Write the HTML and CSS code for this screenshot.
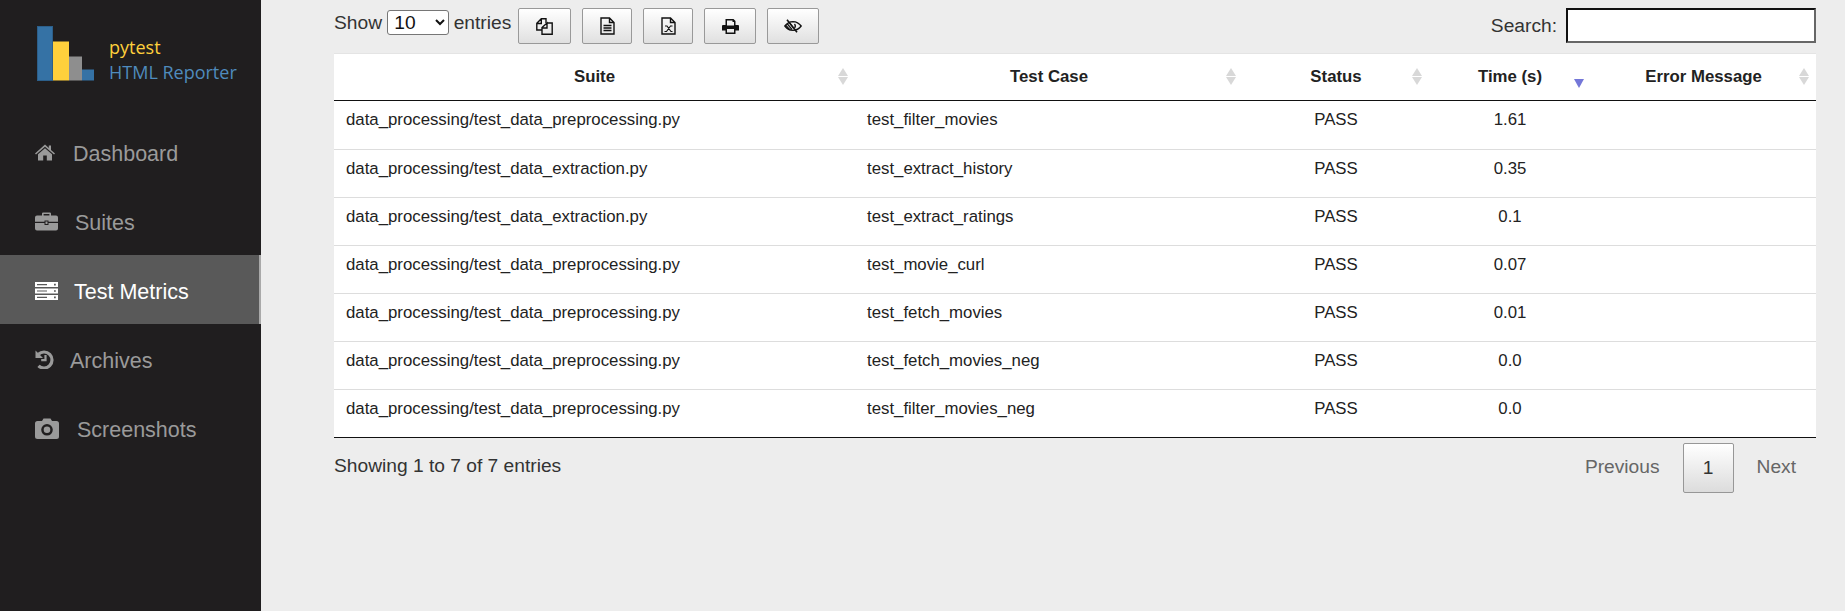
FILE: index.html
```html
<!DOCTYPE html>
<html lang="en">
<head>
  <meta charset="UTF-8">
  <meta name="viewport" content="width=device-width, initial-scale=1.0">
  <title>pytest HTML Reporter</title>
  <link rel="stylesheet" href="styles.css">
</head>
<body>
  <aside class="sidebar">
    <div class="brand">
      <svg class="brand-logo" width="58" height="56" viewBox="0 0 58 56">
        <rect x="0.5" y="0.5" width="15" height="54" fill="#3572a5" stroke="#2c5f8a"/>
        <rect x="16" y="15.5" width="16" height="39" fill="#ffd03c"/>
        <rect x="32" y="30.5" width="13" height="24" fill="#8e8e8e"/>
        <rect x="45" y="43.5" width="12" height="11" fill="#3572a5"/>
      </svg>
      <div class="brand-text">
        <span class="brand-top">pytest</span>
        <span class="brand-bottom">HTML Reporter</span>
      </div>
    </div>
    <nav class="nav">
      <a class="nav-item nav-dashboard">
        <svg class="nav-icon" width="20" height="17" viewBox="0 0 20 17"><path d="M10 0.5 L13.8 4 V1.5 H16 V6 L20 9.5 L19 10.5 L10 2.8 L1 10.5 L0 9.5 Z M10 4.3 L17 10.3 V16.5 H11.8 V11.5 H8.2 V16.5 H3 V10.3 Z" fill="currentColor"/></svg>
        <span>Dashboard</span>
      </a>
      <a class="nav-item nav-suites">
        <svg class="nav-icon" width="23" height="19" viewBox="0 0 23 19"><path d="M7 3.5 V1.6 Q7 0.5 8.1 0.5 H14.9 Q16 0.5 16 1.6 V3.5 H21 Q23 3.5 23 5.5 V9.8 H13.5 V8.5 H9.5 V9.8 H0 V5.5 Q0 3.5 2 3.5 Z M8.6 3.5 H14.4 V2 H8.6 Z M0 11 H9.5 V13 H13.5 V11 H23 V16.5 Q23 18.5 21 18.5 H2 Q0 18.5 0 16.5 Z M10.5 9.5 H12.5 V12 H10.5 Z" fill="currentColor" fill-rule="evenodd"/></svg>
        <span>Suites</span>
      </a>
      <a class="nav-item nav-metrics active">
        <svg class="nav-icon" width="23" height="18" viewBox="0 0 23 18"><path d="M0 0 H23 V5 H0 Z M0 6.5 H23 V11.5 H0 Z M0 13 H23 V18 H0 Z M2 3.2 V2 H12 V3.2 Z M2 9.6 V8.4 H12 V9.6 Z M2 16 V14.8 H12 V16 Z M19 1.8 H20.8 V3.4 H19 Z M19 8.2 H20.8 V9.8 H19 Z M19 14.6 H20.8 V16.2 H19 Z" fill="currentColor" fill-rule="evenodd"/></svg>
        <span>Test Metrics</span>
      </a>
      <a class="nav-item nav-archives">
        <svg class="nav-icon" width="20" height="19" viewBox="0 0 20 19"><path d="M0.5 0.5 V8 H8 Z" fill="currentColor"/><path d="M3.5 4.2 A8 8 0 1 1 3.5 15.8" fill="none" stroke="currentColor" stroke-width="3.2"/><path d="M10.5 5 V10.2 H6.2" fill="none" stroke="currentColor" stroke-width="2.2"/></svg>
        <span>Archives</span>
      </a>
      <a class="nav-item nav-shots">
        <svg class="nav-icon" width="24" height="21" viewBox="0 0 24 21"><path d="M7 3 L8.5 0.5 H15.5 L17 3 H21.5 Q24 3 24 5.5 V18.5 Q24 21 21.5 21 H2.5 Q0 21 0 18.5 V5.5 Q0 3 2.5 3 Z M12 6 A5.8 5.8 0 1 0 12 17.6 A5.8 5.8 0 1 0 12 6 Z M12 8.5 A3.3 3.3 0 1 1 12 15.1 A3.3 3.3 0 1 1 12 8.5 Z" fill="currentColor" fill-rule="evenodd"/></svg>
        <span>Screenshots</span>
      </a>
    </nav>
  </aside>

  <main class="content">
    <div class="toolbar">
      <div class="toolbar-left">
        <label class="length">Show
          <select class="length-select"><option>10</option></select>
          entries</label>
        <div class="buttons">
          <button class="dt-button btn-copy" type="button">
            <svg width="17" height="17" viewBox="0 0 17 17" fill="none" stroke="#111" stroke-width="1.4"><path d="M10 5 V0.8 H5.3 L0.8 5.3 V12 H6 M5.3 0.8 V5.5 H0.8"/><path d="M11 5 H16.2 V16.2 H6 V9.6 L11 5 V10 H6"/></svg>
          </button>
          <button class="dt-button btn-doc" type="button">
            <svg width="15" height="18" viewBox="0 0 15 18" fill="none" stroke="#111" stroke-width="1.4"><path d="M1 1 H9.5 L14 5.5 V17 H1 Z M9.5 1 V5.5 H14 M3.5 8.5 H11.5 M3.5 11 H11.5 M3.5 13.5 H11.5"/></svg>
          </button>
          <button class="dt-button btn-xls" type="button">
            <svg width="15" height="18" viewBox="0 0 15 18" fill="none" stroke="#111" stroke-width="1.4"><path d="M1 1 H9.5 L14 5.5 V17 H1 Z M9.5 1 V5.5 H14"/><path d="M4 9 H6 L10 14.5 H11.5 M3.5 14.5 H5.5 L9.5 9 H11.5" stroke-width="1.1"/></svg>
          </button>
          <button class="dt-button btn-print" type="button">
            <svg width="17" height="15" viewBox="0 0 17 15"><path d="M3.5 0 H11.5 L13.5 2 V6 H16 Q17 6 17 7 V11.5 H13.5 V15 H3.5 V11.5 H0 V7 Q0 6 1 6 H3.5 Z M5 1.5 V6.5 H12 V3 H10.5 V1.5 Z M5 10 V13.5 H12 V10 Z" fill="#111" fill-rule="evenodd"/></svg>
          </button>
          <button class="dt-button btn-eye" type="button">
            <svg width="18" height="14" viewBox="0 0 18 14" fill="none" stroke="#111"><path d="M0.8 7 Q4 2.8 9 2.6 Q14 2.8 17.2 7 Q14 11.2 9 11.4 Q4 11.2 0.8 7 Z" stroke-width="1.3"/><path d="M3 0.8 L13 13.2" stroke-width="1.6"/><path d="M1.5 6 L6 11 M3 4.5 L8 10.5 M5 3.2 L9.5 9" stroke-width="1.2"/><path d="M10.5 5 Q12.2 7 10.5 9" stroke-width="1.3"/></svg>
          </button>
        </div>
      </div>
      <label class="search">Search:
        <input class="search-input" type="search">
      </label>
    </div>

    <table class="report">
      <colgroup>
        <col class="col-suite">
        <col class="col-case">
        <col class="col-status">
        <col class="col-time">
        <col class="col-error">
      </colgroup>
      <thead>
        <tr>
          <th class="sortable">Suite</th>
          <th class="sortable">Test Case</th>
          <th class="sortable">Status</th>
          <th class="sorted">Time (s)</th>
          <th class="sortable">Error Message</th>
        </tr>
      </thead>
      <tbody>
        <tr><td>data_processing/test_data_preprocessing.py</td><td>test_filter_movies</td><td class="mid">PASS</td><td class="mid">1.61</td><td></td></tr>
        <tr><td>data_processing/test_data_extraction.py</td><td>test_extract_history</td><td class="mid">PASS</td><td class="mid">0.35</td><td></td></tr>
        <tr><td>data_processing/test_data_extraction.py</td><td>test_extract_ratings</td><td class="mid">PASS</td><td class="mid">0.1</td><td></td></tr>
        <tr><td>data_processing/test_data_preprocessing.py</td><td>test_movie_curl</td><td class="mid">PASS</td><td class="mid">0.07</td><td></td></tr>
        <tr><td>data_processing/test_data_preprocessing.py</td><td>test_fetch_movies</td><td class="mid">PASS</td><td class="mid">0.01</td><td></td></tr>
        <tr><td>data_processing/test_data_preprocessing.py</td><td>test_fetch_movies_neg</td><td class="mid">PASS</td><td class="mid">0.0</td><td></td></tr>
        <tr><td>data_processing/test_data_preprocessing.py</td><td>test_filter_movies_neg</td><td class="mid">PASS</td><td class="mid">0.0</td><td></td></tr>
      </tbody>
    </table>

    <div class="table-foot">
      <div class="info">Showing 1 to 7 of 7 entries</div>
      <div class="paging">
        <a class="page-link page-prev">Previous</a>
        <a class="page-current">1</a>
        <a class="page-link page-next">Next</a>
      </div>
    </div>
  </main>
</body>
</html>
```

FILE: styles.css
```css
* {
  box-sizing: border-box;
}

body {
  margin: 0;
  height: 611px;
  overflow: hidden;
  display: flex;
  background: #ededed;
  color: #333;
  font-family: "Liberation Sans", Arial, sans-serif;
  font-size: 19.2px;
}

.sidebar {
  width: 261px;
  flex-shrink: 0;
  background: #201e1f;
}

.brand {
  display: flex;
  align-items: flex-start;
  height: 117px;
  padding: 26px 0 0 37px;
}

.brand-logo {
  flex-shrink: 0;
}

.brand-text {
  display: flex;
  flex-direction: column;
  margin-top: 9px;
  margin-left: 14px;
  font-family: "Open Sans", sans-serif;
  font-size: 18px;
  line-height: 25px;
}

.brand-top {
  color: #ffd03c;
}

.brand-bottom {
  color: #4f8bbd;
}

.nav {
  display: flex;
  flex-direction: column;
}

.nav-item {
  display: flex;
  align-items: center;
  height: 69px;
  padding: 2px 0 0 35px;
  color: #9a9a9a;
  font-size: 21.5px;
}

.nav-item span {
  padding-top: 4px;
}

.nav-icon {
  flex-shrink: 0;
}

.nav-dashboard span { margin-left: 18px; }
.nav-suites span { margin-left: 17px; }
.nav-metrics span { margin-left: 16px; }
.nav-archives span { margin-left: 15px; }
.nav-shots span { margin-left: 18px; }

.nav-item.active {
  background: #595959;
  border-right: 2px solid #a9a9a9;
  color: #fff;
}

.content {
  flex: 1;
  padding: 0 29px 0 73px;
  min-width: 0;
}

.toolbar {
  display: flex;
  justify-content: space-between;
  align-items: flex-start;
  height: 53px;
  padding-top: 8px;
}

.toolbar-left {
  display: flex;
  align-items: flex-start;
}

.length {
  padding-top: 2px;
}

.length-select {
  width: 62px;
  height: 25px;
  margin: 0 -1px 0 0;
  padding: 0 0 0 2px;
  background: #fff;
  border: 1px solid #767676;
  border-radius: 3px;
  font-family: "Liberation Sans", Arial, sans-serif;
  font-size: 19.2px;
  color: #111;
}

.buttons {
  display: flex;
  gap: 11px;
  margin-left: 7px;
}

.dt-button {
  display: flex;
  align-items: center;
  justify-content: center;
  height: 36px;
  padding: 0;
  background: linear-gradient(to bottom, #fff 0%, #e0e0e0 100%);
  border: 1px solid #999;
  border-radius: 2px;
}

.btn-copy { width: 53px; }
.btn-doc { width: 50px; }
.btn-xls { width: 50px; }
.btn-print { width: 52px; }
.btn-eye { width: 52px; }

.search {
  display: flex;
  align-items: center;
  gap: 9px;
}

.search-input {
  width: 250px;
  height: 35px;
  background: #fff;
  border: 2px solid;
  border-color: #111 #666 #666 #111;
  outline: none;
}

.report {
  width: 100%;
  table-layout: fixed;
  border-collapse: separate;
  border-spacing: 0;
  background: #fff;
  color: #222;
  font-size: 16.8px;
}

.col-suite { width: 521px; }
.col-case { width: 388px; }
.col-status { width: 186px; }
.col-time { width: 162px; }
.col-error { width: 225px; }

.report th {
  height: 48px;
  padding: 0 10px;
  border-top: 1px solid #e4e4e4;
  border-bottom: 1px solid #111;
  text-align: center;
  color: #222;
  position: relative;
}

.report th.sortable::before,
.report th.sortable::after,
.report th.sorted::after {
  content: "";
  position: absolute;
  right: 7px;
  border-left: 5px solid transparent;
  border-right: 5px solid transparent;
}

.report th.sortable::before {
  top: 14px;
  border-bottom: 8px solid #d8d8d8;
}

.report th.sortable::after {
  top: 23px;
  border-top: 8px solid #d8d8d8;
}

.report th.sorted::after {
  top: 25px;
  border-top: 9px solid #7477d8;
}

.report td {
  height: 48px;
  padding: 7px 12px 0;
  vertical-align: top;
  border-top: 1px solid #ddd;
  line-height: 24px;
}

.report tbody tr:first-child td {
  border-top: none;
}

.report tbody tr:last-child td {
  height: 49px;
  border-bottom: 1px solid #111;
}

.report td.mid {
  text-align: center;
}

.table-foot {
  display: flex;
  justify-content: space-between;
  align-items: flex-start;
  padding-top: 5px;
}

.info {
  padding-top: 11px;
  line-height: 24px;
}

.paging {
  display: flex;
  align-items: center;
}

.page-link {
  padding-bottom: 2px;
  color: #666;
}

.page-prev {
  margin-right: 23px;
}

.page-next {
  margin: 0 20px 0 23px;
}

.page-current {
  display: flex;
  align-items: center;
  justify-content: center;
  width: 51px;
  height: 50px;
  background: linear-gradient(to bottom, #fff 0%, #dcdcdc 100%);
  border: 1px solid #979797;
  border-radius: 2px;
  color: #333;
}
```
